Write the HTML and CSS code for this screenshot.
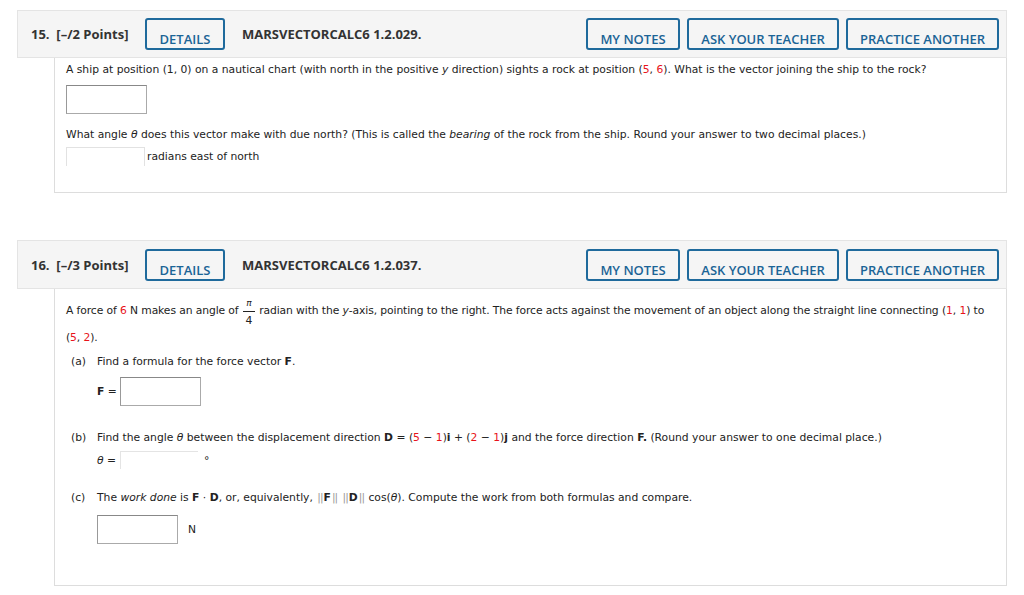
FILE: index.html
```html
<!DOCTYPE html>
<html lang="en">
<head>
  <meta charset="UTF-8" />
  <title>Assignment</title>
  <link rel="stylesheet" href="styles.css">
</head>
<body>
  <div class="question q15">
    <div class="q-head">
      <span class="q-num">15.&nbsp; [–/2 Points]</span>
      <button class="btn btn-details">DETAILS</button>
      <span class="q-code">MARSVECTORCALC6 1.2.029.</span>
      <div class="q-actions">
        <button class="btn">MY NOTES</button>
        <button class="btn">ASK YOUR TEACHER</button>
        <button class="btn">PRACTICE ANOTHER</button>
      </div>
    </div>
    <div class="q-body">
      <p class="line first">A ship at position (1, 0) on a nautical chart (with north in the positive <i>y</i> direction) sights a rock at position (<span class="red">5</span>, <span class="red">6</span>). What is the vector joining the ship to the rock?</p>
      <div class="answer big"></div>
      <p class="line angle-q">What angle <i>θ</i> does this vector make with due north? (This is called the <i>bearing</i> of the rock from the ship. Round your answer to two decimal places.)</p>
      <div class="inline-answer">
        <span class="answer slim"></span>
        <span class="unit">radians east of north</span>
      </div>
    </div>
  </div>

  <div class="question q16">
    <div class="q-head">
      <span class="q-num">16.&nbsp; [–/3 Points]</span>
      <button class="btn btn-details">DETAILS</button>
      <span class="q-code">MARSVECTORCALC6 1.2.037.</span>
      <div class="q-actions">
        <button class="btn">MY NOTES</button>
        <button class="btn">ASK YOUR TEACHER</button>
        <button class="btn">PRACTICE ANOTHER</button>
      </div>
    </div>
    <div class="q-body">
      <p class="intro">A force of <span class="red">6</span> N makes an angle of <span class="frac"><span class="num"><i>π</i></span><span class="den">4</span></span> radian with the <i>y</i>-axis, pointing to the right. The force acts against the movement of an object along the straight line connecting (<span class="red">1</span>, <span class="red">1</span>) to (<span class="red">5</span>, <span class="red">2</span>).</p>

      <div class="part part-a">
        <span class="part-label">(a)</span>
        <div class="part-main">
          <p class="line">Find a formula for the force vector <b>F</b>.</p>
          <div class="eq">
            <span class="eq-label"><b>F</b> =</span>
            <span class="answer big"></span>
          </div>
        </div>
      </div>

      <div class="part part-b">
        <span class="part-label">(b)</span>
        <div class="part-main">
          <p class="line">Find the angle <i>θ</i> between the displacement direction <b>D</b> = (<span class="red">5</span> − <span class="red">1</span>)<b>i</b> + (<span class="red">2</span> − <span class="red">1</span>)<b>j</b> and the force direction <b>F.</b> (Round your answer to one decimal place.)</p>
          <div class="eq eq-theta">
            <span class="eq-label"><i>θ</i> =</span>
            <span class="answer slim"></span>
            <span class="deg">°</span>
          </div>
        </div>
      </div>

      <div class="part part-c">
        <span class="part-label">(c)</span>
        <div class="part-main">
          <p class="line">The <i>work done</i> is <b>F</b> · <b>D</b>, or, equivalently, <span class="bars">||</span><b>F</b><span class="bars">||</span> <span class="bars">||</span><b>D</b><span class="bars">||</span> cos(<i>θ</i>). Compute the work from both formulas and compare.</p>
          <div class="eq eq-work">
            <span class="answer big"></span>
            <span class="unit-n">N</span>
          </div>
        </div>
      </div>
    </div>
  </div>
</body>
</html>
```

FILE: styles.css
```css
body {
  margin: 0;
  padding: 10px 17px 0;
  background: #ffffff;
  font-family: "DejaVu Sans", Verdana, sans-serif;
  font-size: 10.75px;
  color: #222222;
}

p {
  margin: 0;
}

.red {
  color: #e8131b;
}

.question {
  width: 990px;
}

.q16 {
  margin-top: 47px;
}

/* header bar */
.q-head {
  display: flex;
  align-items: center;
  height: 46px;
  background: #f5f5f5;
  border: 1px solid #e4e4e4;
  padding-left: 13px;
  font-family: "Open Sans", sans-serif;
  color: #333333;
}

.q16 .q-head {
  height: 47px;
}

.q-num {
  font-weight: 700;
  font-size: 13px;
  width: 114px;
}

.q-code {
  font-weight: 700;
  font-size: 13px;
  margin-left: 17px;
}

.q-actions {
  display: flex;
  gap: 7px;
  margin-left: auto;
  margin-right: 7px;
}

.btn {
  height: 32px;
  padding: 10px 0 0;
  background: transparent;
  border: 2px solid #1f6a9c;
  border-radius: 3px;
  color: #1b6496;
  font-family: "Open Sans", sans-serif;
  font-weight: 600;
  font-size: 13px;
  line-height: 16px;
}

.btn-details {
  width: 80px;
}

.q-actions .btn:nth-child(1) { width: 94px; }
.q-actions .btn:nth-child(2) { width: 152px; }
.q-actions .btn:nth-child(3) { width: 153px; }

/* body box */
.q-body {
  margin-left: 37px;
  border: 1px solid #dddddd;
  border-top: none;
  padding: 4px 11px 0;
}

.q15 .q-body {
  height: 130px;
}

.q16 .q-body {
  height: 288px;
  padding-top: 8px;
}

.line {
  line-height: 16px;
}

.answer {
  display: inline-block;
  box-sizing: border-box;
  background: #ffffff;
}

.answer.big {
  display: block;
  width: 81px;
  height: 29px;
  border: 1px solid #aaaaaa;
  border-top-color: #888888;
  border-left-color: #999999;
}

.q15 .answer.big {
  margin-top: 7px;
}

.angle-q {
  margin-top: 13px;
}

.inline-answer {
  display: flex;
  align-items: center;
  margin-top: 4px;
}

.answer.slim {
  width: 79px;
  height: 19px;
  border: 1px solid #e2e2e2;
  border-bottom: none;
}

.unit {
  margin-left: 2px;
}

/* question 16 */
.intro {
  line-height: 27px;
  letter-spacing: -0.1px;
}

.frac {
  display: inline-flex;
  flex-direction: column;
  align-items: center;
  vertical-align: middle;
  line-height: 11px;
  margin: -6px 1px;
  position: relative;
  top: 1px;
}

.frac .num {
  font-size: 9px;
  padding: 0 1px 2px;
  border-bottom: 1px solid #222222;
  width: 10px;
  text-align: center;
}

.frac .den {
  padding-top: 3px;
}

.part {
  display: flex;
}

.part-label {
  width: 26px;
  padding-left: 5px;
  line-height: 16px;
}

.part-a {
  margin-top: 3px;
}

.part-b {
  margin-top: 24px;
}

.part-c {
  margin-top: 21px;
}

.eq {
  display: flex;
  align-items: center;
  margin-top: 7px;
}

.eq-label {
  width: 23px;
}

.eq-theta {
  margin-top: 5px;
}

.eq-theta .answer.slim {
  width: 78px;
  height: 18px;
  border-color: #e4e4e4;
  border-bottom: none;
  border-right: none;
}

.deg {
  margin-left: 6px;
}

.eq-work {
  margin-top: 9px;
}

.unit-n {
  margin-left: 10px;
}

.bars {
  color: #999999;
  letter-spacing: -1px;
  padding: 0 1px;
}
```
